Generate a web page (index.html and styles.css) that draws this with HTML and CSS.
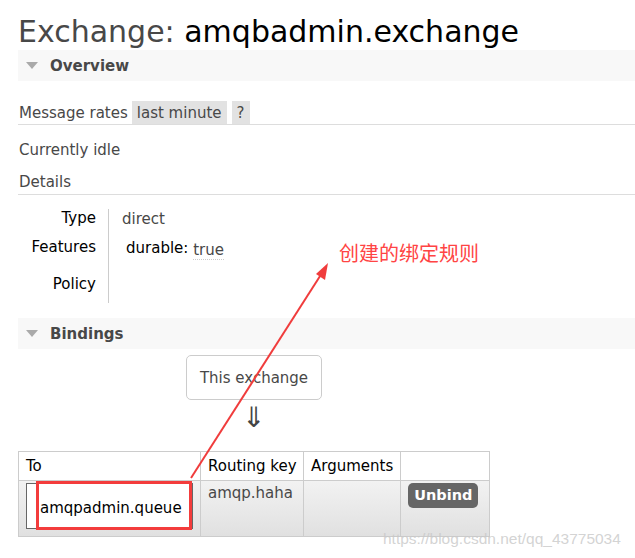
FILE: index.html
```html
<!DOCTYPE html>
<html>
<head>
<meta charset="utf-8">
<link rel="stylesheet" href="styles.css">
</head>
<body>
<div class="page">
  <h1 class="title"><span class="title-label">Exchange:</span> amqbadmin.exchange</h1>

  <div class="section-head"><span class="tri"></span><span class="section-name">Overview</span></div>

  <div class="rates-row">
    <span class="rates-label">Message rates</span>
    <span class="chip">last minute</span>
    <span class="chip chip-q">?</span>
  </div>
  <div class="plain">Currently idle</div>
  <div class="plain details-head">Details</div>

  <div class="facts">
    <div class="facts-keys">
      <div class="fk fk-type">Type</div>
      <div class="fk fk-feat">Features</div>
      <div class="fk fk-pol">Policy</div>
    </div>
    <div class="facts-vals">
      <div class="fv fv-type">direct</div>
      <div class="fv fv-feat"><span class="dur">durable:</span> <span class="true">true</span></div>
    </div>
  </div>

  <div class="section-head bindings"><span class="tri"></span><span class="section-name">Bindings</span></div>

  <div class="flow">
    <div class="this-ex">This exchange</div>
    <div class="down">&#8659;</div>
  </div>

  <table class="bind-table">
    <thead>
      <tr><th class="c-to">To</th><th class="c-rk">Routing key</th><th class="c-args">Arguments</th><th class="c-act"></th></tr>
    </thead>
    <tbody>
      <tr>
        <td class="c-to"><div class="queue-box">amqpadmin.queue</div></td>
        <td class="c-rk rk-val">amqp.haha</td>
        <td class="c-args"></td>
        <td class="c-act"><span class="unbind">Unbind</span></td>
      </tr>
    </tbody>
  </table>
</div>

<div class="red-box"></div>
<div class="note">创建的绑定规则</div>
<svg class="arrow" width="635" height="558" viewBox="0 0 635 558">
  <line x1="191" y1="478" x2="322" y2="273" stroke="#f03c3c" stroke-width="2"/>
  <polygon points="328,263 316,274 325,280" fill="#f03c3c"/>
</svg>
<div class="watermark">https://blog.csdn.net/qq_43775034</div>
</body>
</html>
```

FILE: styles.css
```css
html, body {
  margin: 0;
  padding: 0;
  background: #fff;
}
body {
  width: 635px;
  height: 558px;
  overflow: hidden;
  position: relative;
  font-family: "DejaVu Sans", Verdana, sans-serif;
  color: #484848;
  font-size: 15px;
}
.page {
  padding-left: 18px;
}
.title {
  margin: 0;
  padding-top: 14px;
  height: 36px;
  font-size: 30px;
  font-weight: normal;
  line-height: 36px;
  color: #000;
}
.title-label {
  color: #484848;
}
.section-head {
  height: 31px;
  background: #f8f8f8;
  display: flex;
  align-items: center;
}
.tri {
  width: 0;
  height: 0;
  border-left: 6px solid transparent;
  border-right: 6px solid transparent;
  border-top: 7px solid #aaa;
  margin-left: 8px;
  margin-right: 12px;
}
.section-name {
  font-weight: bold;
  font-size: 15px;
  color: #484848;
}
.rates-row {
  margin-top: 20px;
  height: 23px;
  display: flex;
  align-items: center;
  gap: 5px;
  border-bottom: 1px solid #ddd;
}
.rates-label {
  margin-left: 1px;
  margin-right: -1px;
}
.chip {
  background: #e2e2e2;
  height: 23px;
  line-height: 24px;
  padding: 0 5px;
}
.plain {
  margin-left: 1px;
  line-height: 20px;
}
.rates-row + .plain {
  margin-top: 15px;
}
.details-head {
  margin-top: 12px;
  margin-left: 0;
  padding-left: 1px;
  padding-bottom: 2px;
  border-bottom: 1px solid #ddd;
}
.facts {
  display: flex;
  margin-top: 14px;
  height: 94px;
}
.facts-keys {
  width: 78px;
  border-right: 1px solid #ccc;
  text-align: right;
  padding-right: 12px;
  color: #000;
}
.fk { line-height: 20px; }
.fk-type { margin-top: -1px; }
.fk-feat { margin-top: 9px; }
.fk-pol { margin-top: 17px; }
.facts-vals {
  padding-left: 13px;
}
.fv { line-height: 20px; }
.fv-type { margin-top: 0; }
.fv-feat { margin-top: 9px; padding-left: 4px; }
.dur { color: #000; }
.true {
  color: #484848;
  border-bottom: 1px dotted #ccc;
  position: relative;
  top: 2px;
}
.bindings {
  margin-top: 15px;
}
.flow {
  display: flex;
  flex-direction: column;
  align-items: center;
  width: 472px;
}
.this-ex {
  margin-top: 6px;
  border: 1px solid #ccc;
  border-radius: 5px;
  height: 43px;
  line-height: 44px;
  padding: 0 13px;
}
.down {
  font-size: 28px;
  line-height: 30px;
  height: 30px;
  color: #444;
  margin-top: 3px;
}
.bind-table {
  margin-top: 18px;
  border-collapse: collapse;
  white-space: nowrap;
}
.bind-table th, .bind-table td {
  border: 1px solid #ccc;
  vertical-align: top;
}
.bind-table th {
  font-weight: normal;
  color: #000;
  text-align: left;
  height: 28px;
  padding: 0 7px;
  line-height: 28px;
  background: #fff;
}
.bind-table tbody tr {
  background: linear-gradient(#f2f2f2, #e0e0e0);
}
.bind-table td {
  height: 53px;
  padding: 0 7px;
}
.c-to { width: 167px; }
.bind-table .c-rk { width: 89px; padding-right: 6px; }
.c-args { width: 81px; }
.c-act { width: 74px; }
.bind-table td.c-to {
  padding: 2px 6px 4px 7px;
  height: 47px;
}
.queue-box {
  background: #fff;
  border: 1px solid #666;
  height: 44px;
  line-height: 48px;
  padding-left: 13px;
  color: #000;
  width: 152px;
}
.rk-val {
  line-height: 24px;
  color: #484848;
}
.bind-table td.c-act {
  padding-top: 2px;
}
.unbind {
  display: inline-block;
  background: #666;
  color: #fff;
  font-weight: bold;
  font-size: 14.5px;
  border-radius: 5px;
  height: 25px;
  line-height: 25px;
  padding: 0 6px;
}
.red-box {
  position: absolute;
  left: 36px;
  top: 481px;
  width: 150px;
  height: 43px;
  border: 3px solid #f33c3c;
}
.note {
  position: absolute;
  left: 339px;
  top: 240px;
  font-family: "Noto Sans CJK SC", sans-serif;
  font-size: 20px;
  line-height: 26px;
  color: #f44;
}
.arrow {
  position: absolute;
  left: 0;
  top: 0;
  pointer-events: none;
}
.watermark {
  position: absolute;
  left: 383px;
  top: 529px;
  font-family: "Liberation Sans", Arial, sans-serif;
  font-size: 15.5px;
  color: rgba(200, 200, 200, 0.8);
  line-height: 20px;
}
```
